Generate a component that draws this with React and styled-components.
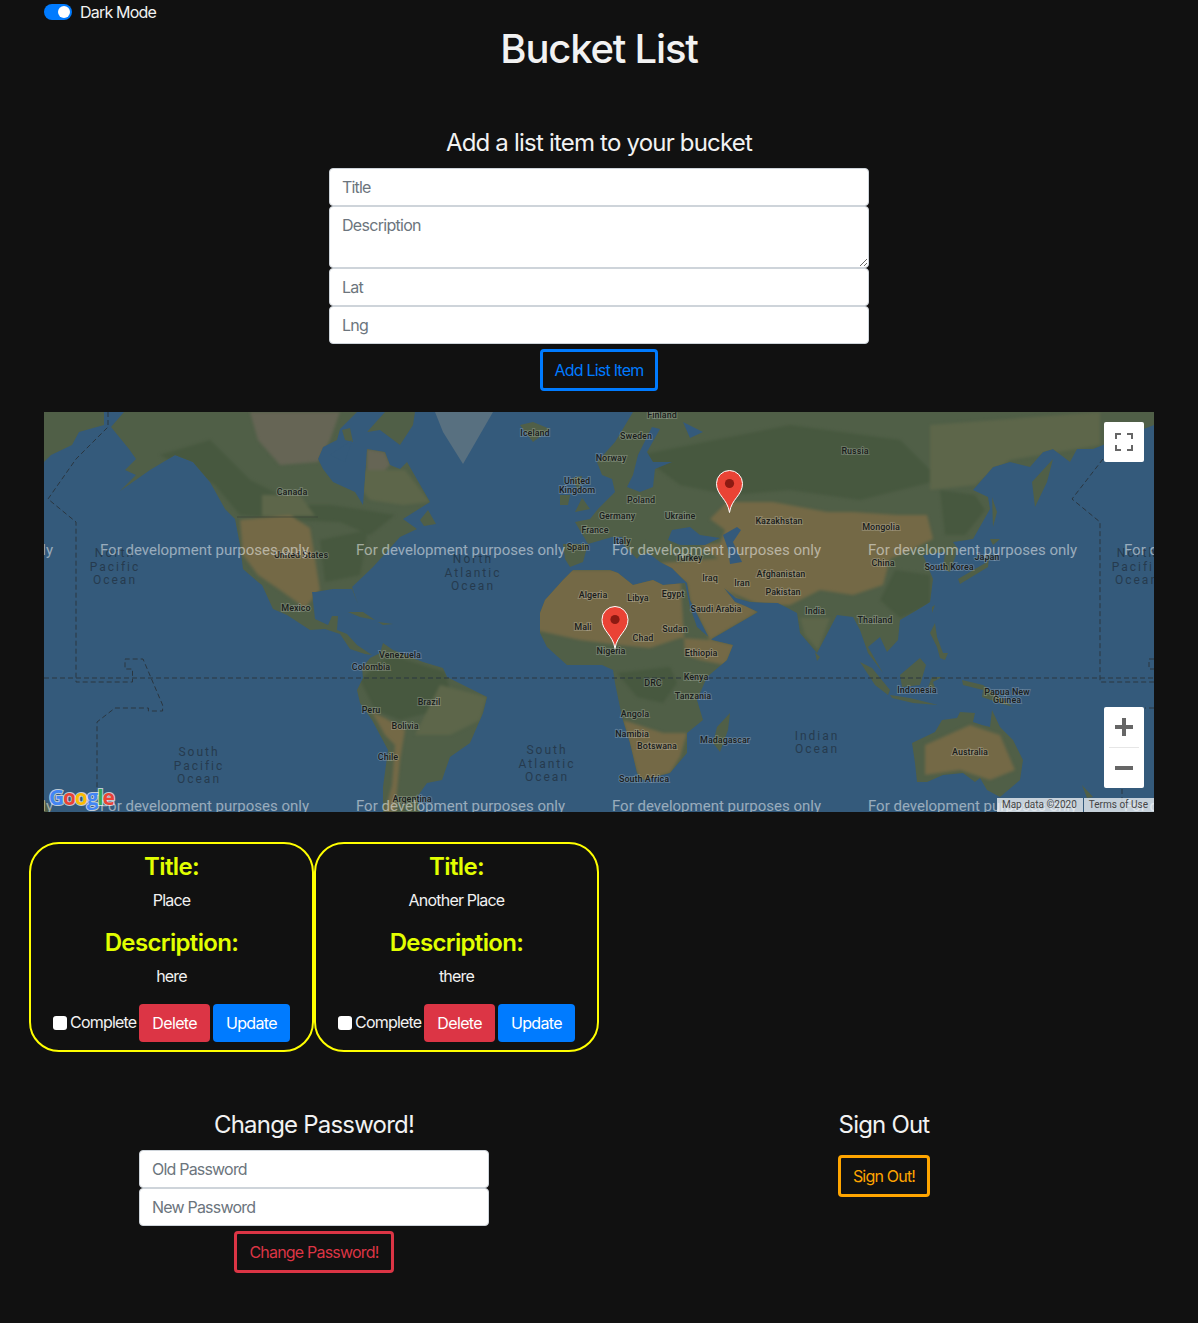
import styled, { createGlobalStyle } from 'styled-components';

const GlobalStyle = createGlobalStyle`
  * { box-sizing: border-box; }
  body {
    margin: 0;
    background-color: #111;
    color: #f2f2f2;
    font-family: Inter, "Liberation Sans", sans-serif;
    font-size: 16px;
    line-height: 24px;
    letter-spacing: -0.8px;
  }
`;

const Container = styled.div`
  width: 1140px;
  margin: 0 auto;
  padding: 0 15px 50px;
`;
const DarkToggle = styled.label`
  display: flex;
  align-items: center;
  gap: 8px;
  height: 24px;
`;
const Track = styled.span`
  display: flex;
  justify-content: flex-end;
  align-items: center;
  width: 28px;
  height: 16px;
  padding: 2px;
  border-radius: 8px;
  background-color: #007bff;
`;
const Knob = styled.span`
  width: 12px;
  height: 12px;
  border-radius: 50%;
  background-color: #fff;
`;
const Title = styled.h1`
  margin: 1px 0 0;
  font-size: 40px;
  line-height: 48px;
  font-weight: 500;
  text-align: center;
  letter-spacing: -1.2px;
`;
const Heading = styled.h4`
  margin: 0 0 11px;
  font-size: 24px;
  line-height: 29px;
  font-weight: 400;
  text-align: center;
  letter-spacing: -0.8px;
`;
const AddSection = styled.section`
  display: flex;
  flex-direction: column;
  align-items: center;
  margin-top: 55px;
`;
const FieldStack = styled.div`
  display: flex;
  flex-direction: column;
  width: ${(props) => props.$width}px;
`;
const Field = styled.input`
  display: block;
  width: 100%;
  height: 38px;
  padding: 6px 12px;
  border: 1px solid #ced4da;
  border-radius: 4px;
  background-color: #fff;
  font: inherit;
  letter-spacing: -0.8px;
  &::placeholder { color: #6c757d; opacity: 1; }
`;
const AreaField = styled.textarea`
  display: block;
  width: 100%;
  height: 62px;
  padding: 6px 12px;
  border: 1px solid #ced4da;
  border-radius: 4px;
  background-color: #fff;
  font: inherit;
  letter-spacing: -0.7px;
  &::placeholder { color: #6c757d; opacity: 1; }
`;
const OutlineButton = styled.button`
  margin-top: 5px;
  height: 42px;
  padding: 6px 12px;
  border: 3px solid ${(props) => props.$color};
  border-radius: 4px;
  background-color: transparent;
  color: ${(props) => props.$color};
  font: inherit;
  letter-spacing: -0.8px;
`;
const MapFrame = styled.div`
  position: relative;
  height: 400px;
  margin-top: 21px;
  overflow: hidden;
  background-color: #345a7b;
  letter-spacing: 0;
`;
const MapSvg = styled.svg`
  display: block;
`;
const Patches = styled.g`
  filter: blur(1.5px);
`;
const CountryLabel = styled.text`
  font-family: Roboto, sans-serif;
  font-size: 9px;
  font-weight: 500;
  fill: #1a1d1c;
  stroke: rgba(255, 255, 255, 0.2);
  stroke-width: 2px;
  paint-order: stroke;
  text-anchor: middle;
  dominant-baseline: central;
`;
const OceanLabel = styled.text`
  font-family: Roboto, sans-serif;
  font-size: 12px;
  letter-spacing: 2px;
  fill: #263a4e;
  text-anchor: middle;
  dominant-baseline: central;
`;
const Watermark = styled.text`
  font-family: Roboto, sans-serif;
  font-size: 15px;
  fill: rgba(255, 255, 255, 0.5);
  text-anchor: middle;
  dominant-baseline: central;
`;
const GoogleLogo = styled.text`
  font-family: "Open Sans", sans-serif;
  font-size: 21px;
  font-weight: 700;
  letter-spacing: -1.2px;
  stroke: rgba(255, 255, 255, 0.7);
  stroke-width: 2px;
  paint-order: stroke;
`;
const MapButton = styled.button`
  position: absolute;
  top: 10px;
  right: 10px;
  display: flex;
  align-items: center;
  justify-content: center;
  width: 40px;
  height: 40px;
  padding: 0;
  border: 0;
  border-radius: 2px;
  background-color: #fff;
`;
const ZoomBox = styled.div`
  position: absolute;
  right: 10px;
  bottom: 24px;
  display: flex;
  flex-direction: column;
  align-items: center;
  width: 40px;
  height: 81px;
  border-radius: 2px;
  background-color: #fff;
`;
const ZoomKey = styled.span`
  display: flex;
  align-items: center;
  justify-content: center;
  width: 40px;
  height: 40px;
`;
const ZoomRule = styled.span`
  width: 30px;
  height: 1px;
  background-color: #e6e6e6;
`;
const Attribution = styled.div`
  position: absolute;
  right: 0;
  bottom: 0;
  display: flex;
  height: 14px;
  gap: 1px;
  font-family: Roboto, sans-serif;
  font-size: 10px;
  line-height: 14px;
  color: #444;
`;
const AttributionItem = styled.span`
  padding: 0 6px 0 5px;
  background-color: rgba(255, 255, 255, 0.72);
`;
const Cards = styled.div`
  display: flex;
  margin: 30px -15px 0;
`;
const Card = styled.div`
  width: 285px;
  height: 210px;
  padding: 8px 0 0;
  border: 2px solid #ff0;
  border-radius: 30px;
  text-align: center;
`;
const CardLabel = styled.h4`
  margin: 0 0 7px;
  font-size: 24px;
  line-height: 29px;
  font-weight: 600;
  color: #e2ff00;
  letter-spacing: -0.65px;
`;
const CardText = styled.p`
  margin: 0 0 16px;
`;
const CardActions = styled.div`
  display: flex;
  align-items: center;
  justify-content: center;
  gap: 3px;
`;
const Complete = styled.label`
  display: flex;
  align-items: center;
  gap: 3px;
  margin-top: -3px;
`;
const Check = styled.input`
  appearance: none;
  width: 14px;
  height: 14px;
  margin: 3px 0 0;
  border-radius: 3px;
  background-color: #fff;
`;
const SolidButton = styled.button`
  height: 38px;
  padding: 6px 13px;
  border: 0;
  border-radius: 4px;
  background-color: ${(props) => props.$color};
  color: #fff;
  font: inherit;
  letter-spacing: -0.65px;
`;
const BottomRow = styled.div`
  display: grid;
  grid-template-columns: 1fr 1fr;
  margin: 58px -15px 0;
`;
const BottomColumn = styled.section`
  display: flex;
  flex-direction: column;
  align-items: center;
`;

const land = '#505f47';
const forest = '#47583f';
const olive = '#5d664a';
const tan = '#746946';
const tundra = '#666555';
const ice = '#587080';
const water = '#345a7b';

// all points are page pixels, the svg group below shifts them into the map
const LAND = [
  // far east Russia, left edge
  '44,412 104,412 104,425 79,432 72,445 51,455 44,462',
  // North and Central America
  '111,427 124,412 357,412 340,429 337,440 323,447 318,459 323,469 333,482 355,492 363,505 365,479 367,449 385,452 390,465 400,469 407,462 430,502 403,519 417,529 400,537 373,567 352,587 358,604 352,589 333,589 315,592 312,592 315,619 328,625 332,616 338,616 337,630 347,634 357,645 372,655 365,654 350,649 340,634 325,629 310,630 287,615 273,609 262,585 258,582 243,569 240,545 235,519 225,509 210,482 193,462 175,455 150,470 120,491 136,475 125,470 136,459 129,449',
  '367,432 385,412 415,412 413,425 400,445 380,430',
  '342,430 350,428 353,442 345,440',
  '420,520 428,510 436,524 424,526',
  '348,612 363,612 375,620 360,617',
  '378,622 393,624 383,625',
  // South America
  '357,690 363,678 362,668 370,658 380,653 383,643 393,650 423,662 443,668 447,677 487,697 483,713 470,743 450,757 442,780 427,783 417,797 420,812 383,812 383,787 388,750 372,720 360,703',
  // Iceland, Britain, Ireland
  '520,425 533,422 550,429 533,442',
  '578,492 590,509 575,512 582,498 572,478 582,476',
  '560,495 570,495 568,505 560,505',
  // Eurasia
  '588,544 575,522 590,519 598,509 615,492 612,479 602,475 597,462 615,442 633,412 1154,412 1154,425 1103,445 1093,449 1077,449 1070,462 1053,449 1043,452 1030,467 1010,462 993,467 973,490 988,497 990,509 973,539 953,542 958,549 950,572 943,569 945,552 923,555 933,579 930,602 917,610 900,620 898,640 887,652 880,637 868,647 883,673 868,653 860,630 853,617 837,615 817,653 800,633 797,613 778,603 750,602 736,598 724,588 735,602 745,606 758,612 710,640 690,600 687,583 672,568 660,562 651,555 645,538 650,553 640,555 622,537 612,537',
  '563,544 588,544 583,562 570,567 565,559',
  '622,537 640,555 637,559 623,544',
  // Africa and Madagascar
  '540,613 545,600 563,580 573,570 610,570 618,573 633,585 653,580 663,585 685,583 690,607 697,627 712,640 733,645 727,660 707,677 697,700 703,720 687,733 687,753 670,773 643,780 637,773 630,743 622,717 615,683 613,670 602,665 567,665 547,647 540,633',
  '713,743 717,727 730,713 728,730 720,752',
  // East Asia islands
  '1032,482 1053,459 1047,482 1035,507',
  '992,497 997,512 993,527',
  '990,539 1000,539 993,545',
  '958,579 987,562 990,549 988,567 960,584',
  '932,607 935,605 932,613',
  '930,633 935,623 937,637 943,653 948,653 945,660 940,658 937,647',
  '815,652 820,657 817,661',
  // Indonesia and New Guinea
  '860,662 872,668 890,690 888,695 875,685',
  '890,695 910,698 938,705 913,703 892,698',
  '900,675 920,658 926,665 920,685 902,687',
  '928,687 932,677 942,677 933,682 935,688',
  '962,680 983,685 1013,707 1000,703 982,697 983,690 963,685',
  // Australia, New Zealand
  '912,743 935,732 942,720 957,718 960,712 975,713 973,722 982,725 990,727 992,710 1000,727 1013,740 1023,760 1020,780 1000,797 987,790 980,778 975,782 963,773 943,775 927,782 917,782 915,763',
  '1082,785 1093,797 1087,798',
  '44,800 52,810 48,812 44,812'
];

const PATCHES = [
  [tundra, '250,412 340,412 330,440 318,462 280,465 258,440'],
  [tundra, '367,449 385,452 390,465 383,472 367,470'],
  [olive, '345,470 405,470 430,502 403,505 370,500'],
  [forest, '160,455 210,440 250,480 300,505 330,505 365,510 395,515 370,535 340,522 290,520 240,515 215,485'],
  [olive, '262,495 300,495 315,516 262,516'],
  [tan, '240,520 290,515 310,528 320,590 305,608 280,590 258,575 243,555'],
  [forest, '320,540 368,530 360,575 325,582'],
  [forest, '360,680 390,655 445,672 450,690 440,710 400,720 375,710'],
  [olive, '440,685 487,697 480,720 450,735 415,735'],
  [tan, '372,712 385,718 405,730 400,760 395,812 385,812 392,785 395,745 385,735'],
  [forest, '640,455 790,425 900,440 940,480 860,500 790,490 730,495 680,485'],
  [olive, '930,425 1100,412 1100,445 1010,460 975,485 930,490'],
  [forest, '940,490 975,495 985,510 965,535 945,535'],
  [tan, '710,519 727,502 773,502 827,512 853,512 897,515 927,515 933,539 913,549 890,559 883,585 853,595 820,590 790,605 760,605 725,590 720,560 700,545 720,543 725,530'],
  [tan, '660,563 725,558 725,590 758,612 710,640 690,600 687,583'],
  [tan, '535,630 580,640 620,645 650,648 680,638 712,640 735,645 725,665 700,660 685,655 680,570 530,570'],
  [forest, '617,673 670,667 677,683 663,703 637,697'],
  [tan, '623,720 663,733 687,733 680,757 670,773 643,780 637,773'],
  [forest, '895,570 930,575 930,605 900,618 880,600'],
  [olive, '800,618 830,618 818,650 805,635'],
  [tan, '925,745 970,725 1000,735 1015,770 990,780 960,770 925,775']
];

const WATERS = [
  '627,487 640,492 653,487 655,469 672,462 653,462 647,452 660,429 652,427 638,455 633,475',
  '683,422 703,432 690,438',
  '668,540 672,530 690,527 700,535 720,538 705,545 680,545',
  '723,535 737,527 741,530 733,542 742,562 730,564 728,549',
  '352,440 330,455 345,462'
];

const DASHED = [
  '108,412 108,427 76,459 48,499 76,522 76,682 132.500,682 132.500,669 125,669 125,659 143,659 162.600,705 162.600,711 148.400,711 148.400,708 115,708 97,722 97,789',
  '1103,459 1072,499 1100,522 1100,682 1154,682',
  '1154,708 1145,708',
  '1122,789 1122,812',
  '1154,659 1149,659 1149,669 1154,669',
  '44,678 1154,678'
];

const COUNTRIES = [
  ['Finland', 662, 415], ['Iceland', 535, 433], ['Sweden', 636, 436], ['Norway', 611, 458],
  ['Russia', 855, 451], ['United', 577, 481], ['Kingdom', 577, 490], ['Canada', 292, 492],
  ['Poland', 641, 500], ['Germany', 617, 516], ['Ukraine', 680, 516], ['Kazakhstan', 779, 521],
  ['Mongolia', 881, 527], ['France', 595, 530], ['Italy', 622, 541], ['Spain', 578, 547],
  ['United States', 301, 555], ['Turkey', 689, 558], ['China', 883, 563], ['South Korea', 949, 567],
  ['Japan', 987, 557], ['Iraq', 710, 578], ['Iran', 742, 583], ['Afghanistan', 781, 574],
  ['Pakistan', 783, 592], ['Algeria', 593, 595], ['Libya', 638, 598], ['Egypt', 673, 594],
  ['Saudi Arabia', 716, 609], ['India', 815, 611], ['Mexico', 296, 608], ['Thailand', 875, 620],
  ['Mali', 583, 627], ['Sudan', 675, 629], ['Chad', 643, 638], ['Nigeria', 611, 651],
  ['Venezuela', 400, 655], ['Colombia', 371, 667], ['Ethiopia', 701, 653], ['Kenya', 696, 677],
  ['DRC', 653, 683], ['Indonesia', 917, 690], ['Papua New', 1007, 692], ['Guinea', 1007, 700],
  ['Brazil', 429, 702], ['Tanzania', 693, 696], ['Peru', 371, 710], ['Angola', 635, 714],
  ['Bolivia', 405, 726], ['Namibia', 632, 734], ['Madagascar', 725, 740], ['Botswana', 657, 746],
  ['Chile', 388, 757], ['Australia', 970, 752], ['South Africa', 644, 779], ['Argentina', 412, 799]
];

const OCEANS = [
  ['North', 115, 553], ['Pacific', 115, 567], ['Ocean', 115, 580],
  ['North', 473, 559], ['Atlantic', 473, 573], ['Ocean', 473, 586],
  ['South', 199, 752], ['Pacific', 199, 766], ['Ocean', 199, 779],
  ['South', 547, 750], ['Atlantic', 547, 764], ['Ocean', 547, 777],
  ['Indian', 817, 736], ['Ocean', 817, 749],
  ['North', 1137, 553], ['Pacific', 1137, 567], ['Ocean', 1137, 580]
];

const WATERMARK_X = [-51.5, 204.5, 460.5, 716.5, 972.5, 1228.5];

const Pin = ({ x, y }) => (
  <g transform={`translate(${x} ${y})`}>
    <path
      d="M0,0 C-2,-14 -13,-17 -13,-29 A13,13 0 1 1 13,-29 C13,-17 2,-14 0,0 Z"
      fill="#ea4335"
      stroke="#fff"
      strokeWidth="1"
    />
    <circle cx="0" cy="-29" r="4.6" fill="#8c1a12" />
  </g>
);

const WorldMap = () => (
  <MapFrame>
    <MapSvg width="1110" height="400" viewBox="0 0 1110 400">
      <clipPath id="land-mask">
        {LAND.map((points, i) => (
          <polygon key={i} points={points} />
        ))}
      </clipPath>
      <g transform="translate(-44 -412)">
        <polygon points="435,412 493,412 463,464 443,432" fill={ice} />
        <g clipPath="url(#land-mask)">
          <rect x="44" y="412" width="1110" height="400" fill={land} />
          <Patches>
            {PATCHES.map(([color, points], i) => (
              <polygon key={i} points={points} fill={color} />
            ))}
          </Patches>
        </g>
        {WATERS.map((points, i) => (
          <polygon key={i} points={points} fill={water} />
        ))}
        <polyline points="237,517 318,517" fill="none" stroke="#3a4238" strokeWidth="0.7" />
        {DASHED.map((points, i) => (
          <polyline key={i} points={points} fill="none" stroke="#2a3640" strokeDasharray="5 3" />
        ))}
        {OCEANS.map(([name, x, y], i) => (
          <OceanLabel key={i} x={x} y={y}>{name}</OceanLabel>
        ))}
        {COUNTRIES.map(([name, x, y]) => (
          <CountryLabel key={`${name}${x}`} x={x} y={y}>{name}</CountryLabel>
        ))}
        {[550, 806].map((y) =>
          WATERMARK_X.map((x) => (
            <Watermark key={`${x}${y}`} x={x} y={y}>For development purposes only</Watermark>
          ))
        )}
      </g>
      <Pin x={685.5} y={100.5} />
      <Pin x={571} y={236.5} />
      <GoogleLogo x="5" y="393">
        <tspan fill="#4285f4">G</tspan>
        <tspan fill="#ea4335">o</tspan>
        <tspan fill="#fbbc05">o</tspan>
        <tspan fill="#4285f4">g</tspan>
        <tspan fill="#34a853">l</tspan>
        <tspan fill="#ea4335">e</tspan>
      </GoogleLogo>
    </MapSvg>
    <MapButton aria-label="Toggle fullscreen">
      <svg width="18" height="18" viewBox="0 0 18 18" fill="none" stroke="#666" strokeWidth="2">
        <path d="M1,6 V1 H6 M12,1 H17 V6 M17,12 V17 H12 M6,17 H1 V12" />
      </svg>
    </MapButton>
    <ZoomBox>
      <ZoomKey>
        <svg width="18" height="18" viewBox="0 0 18 18" fill="#666">
          <path d="M7,0 H11 V7 H18 V11 H11 V18 H7 V11 H0 V7 H7 Z" />
        </svg>
      </ZoomKey>
      <ZoomRule />
      <ZoomKey>
        <svg width="18" height="18" viewBox="0 0 18 18" fill="#666">
          <path d="M0,7 H18 V11 H0 Z" />
        </svg>
      </ZoomKey>
    </ZoomBox>
    <Attribution>
      <AttributionItem>Map data ©2020</AttributionItem>
      <AttributionItem>Terms of Use</AttributionItem>
    </Attribution>
  </MapFrame>
);

const ListCard = ({ title, description }) => (
  <Card>
    <CardLabel>Title:</CardLabel>
    <CardText>{title}</CardText>
    <CardLabel>Description:</CardLabel>
    <CardText>{description}</CardText>
    <CardActions>
      <Complete>
        <Check type="checkbox" />
        Complete
      </Complete>
      <SolidButton $color="#dc3545">Delete</SolidButton>
      <SolidButton $color="#007bff">Update</SolidButton>
    </CardActions>
  </Card>
);

const App = () => {
  return (
    <Container>
      <GlobalStyle />
      <DarkToggle>
        <Track>
          <Knob />
        </Track>
        Dark Mode
      </DarkToggle>
      <Title>Bucket List</Title>

      <AddSection>
        <Heading>Add a list item to your bucket</Heading>
        <FieldStack $width={540}>
          <Field placeholder="Title" />
          <AreaField placeholder="Description" />
          <Field placeholder="Lat" />
          <Field placeholder="Lng" />
        </FieldStack>
        <OutlineButton $color="#007bff">Add List Item</OutlineButton>
      </AddSection>

      <WorldMap />

      <Cards>
        <ListCard title="Place" description="here" />
        <ListCard title="Another Place" description="there" />
      </Cards>

      <BottomRow>
        <BottomColumn>
          <Heading>Change Password!</Heading>
          <FieldStack $width={350}>
            <Field placeholder="Old Password" />
            <Field placeholder="New Password" />
          </FieldStack>
          <OutlineButton $color="#dc3545">Change Password!</OutlineButton>
        </BottomColumn>
        <BottomColumn>
          <Heading>Sign Out</Heading>
          <OutlineButton $color="#ffa500">Sign Out!</OutlineButton>
        </BottomColumn>
      </BottomRow>
    </Container>
  );
};

export default App;
